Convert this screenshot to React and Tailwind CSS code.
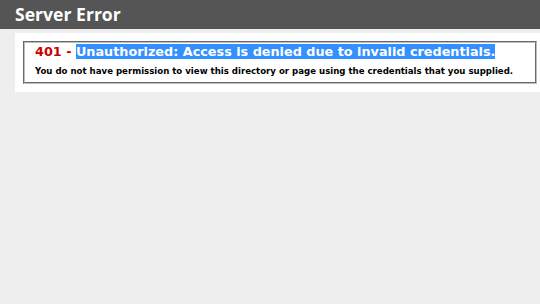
import React from 'react';

const App = () => {
  return (
    <div className="w-[540px] h-[304px] overflow-hidden bg-[#eeeeee] font-['DejaVu_Sans',Verdana,sans-serif]">
      <div className="h-[29px] bg-[#555555] px-[15px]">
        <h1 className="text-[17.6px] leading-[29px] font-bold text-white font-['Open_Sans',sans-serif]">
          Server Error
        </h1>
      </div>

      <div className="ml-[15px] mt-[4px] bg-white pl-[8px] pr-[3px] py-[8px]">
        <div className="border-2 border-[#bdbdbd] [border-style:groove] px-[10px] pt-0 pb-[5px]">
          <h2 className="text-[12.8px] leading-[17px] font-bold text-[#cc0000] whitespace-nowrap">
            401 - <span className="bg-[#3390ff] text-white">Unauthorized: Access is denied due to invalid credentials.</span>
          </h2>
          <h3 className="mt-[5px] text-[8.6px] leading-[12px] font-bold text-black whitespace-nowrap">
            You do not have permission to view this directory or page using the credentials that you supplied.
          </h3>
        </div>
      </div>
    </div>
  );
};

export default App;
